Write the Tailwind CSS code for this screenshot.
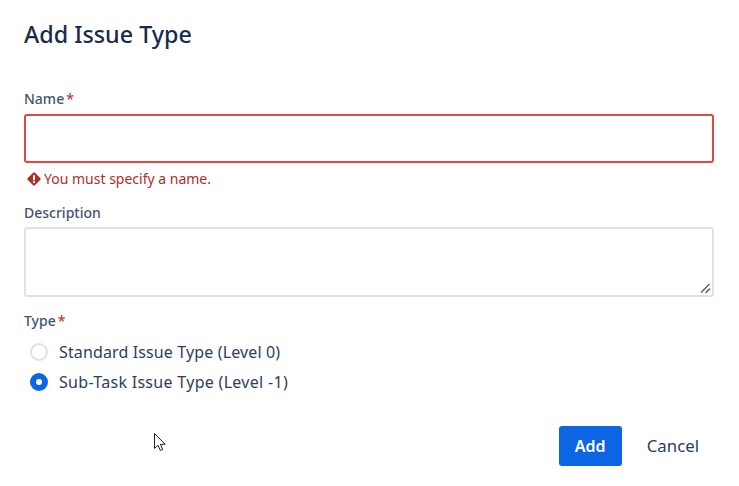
<!DOCTYPE html>
<html lang="en">
<head>
    <meta charset="UTF-8">
    <title>Add Issue Type</title>
    <script src="https://cdn.jsdelivr.net/npm/@tailwindcss/browser@4"></script>
</head>
<body class="bg-white font-['Noto_Sans',sans-serif]">
    <div class="relative w-[739px] h-[486px] overflow-hidden">
        <form class="flex flex-col pl-6 pr-[25px] pt-[17px]">
            <h1 class="h-[34px] text-[23.300px] leading-[34px] font-medium text-[#172b4d]">Add Issue Type</h1>

            <label class="mt-[38px] h-[20px] text-[14px] leading-[20px] font-medium text-[#44546f]">Name<span class="ml-[2px] text-[#c9372c]">*</span></label>
            <input type="text" class="mt-[5px] h-[49px] w-full rounded-[3px] border-2 border-[#e2483d] bg-white outline-none">
            <div class="mt-[6px] flex h-[20px] items-center text-[14px] leading-[20px] text-[#ae2e24]">
                <svg class="ml-[3px] mr-[3px] shrink-0" width="14" height="14" viewBox="0 0 14 14">
                    <path fill="#ae2e24" d="M5.900.9a1.500 1.500 0 0 1 2.200 0l5 5a1.500 1.500 0 0 1 0 2.200l-5 5a1.500 1.500 0 0 1-2.200 0l-5-5a1.500 1.500 0 0 1 0-2.200z"/>
                    <rect x="6" y="3" width="2" height="5.500" rx="1" fill="#fff"/>
                    <circle cx="7" cy="10.200" r="1.100" fill="#fff"/>
                </svg>
                <span>You must specify a name.</span>
            </div>

            <label class="mt-[14px] h-[20px] text-[14px] leading-[20px] font-medium text-[#44546f]">Description</label>
            <div class="relative mt-[4px] h-[70px]">
                <textarea class="block h-[70px] w-full resize-none rounded-[3px] border-2 border-[#dfe1e6] bg-white outline-none"></textarea>
                <!-- resize grip -->
                <svg class="absolute right-[3px] bottom-[3px]" width="11" height="11" viewBox="0 0 11 11">
                    <path fill="none" stroke="#555" stroke-width="1.200" d="M1 9.500 9.500 1M5.500 10 10 5.500"/>
                </svg>
            </div>

            <label class="mt-[14px] h-[20px] text-[14px] leading-[20px] font-medium text-[#44546f]">Type<span class="ml-[2px] text-[#c9372c]">*</span></label>
            <div class="mt-[6px] flex h-[30px] items-center text-[16px] tracking-[.13px] text-[#2c3e5d]">
                <span class="ml-[6px] mr-[11px] size-[18px] rounded-full border-2 border-[#dfe1e6] bg-white"></span>
                <span>Standard Issue Type (Level 0)</span>
            </div>
            <div class="flex h-[30px] items-center text-[16px] tracking-[.3px] text-[#2c3e5d]">
                <span class="ml-[6px] mr-[11px] flex size-[18px] items-center justify-center rounded-full bg-[#0c66e4]">
                    <span class="size-[6px] rounded-full bg-white"></span>
                </span>
                <span>Sub-Task Issue Type (Level -1)</span>
            </div>

            <div class="mt-[29px] flex items-center justify-end">
                <button type="button" class="h-[40px] w-[63px] rounded-[3px] bg-[#0c66e4] text-[16px] font-semibold text-white">Add</button>
                <button type="button" class="ml-[25px] mr-[15px] h-[40px] text-[16.800px] text-[#2c3e5d]">Cancel</button>
            </div>
        </form>

        <svg class="absolute left-[154px] top-[433px]" width="13" height="20" viewBox="0 0 13 20">
            <path fill="#fff" stroke="#1d1d1d" stroke-width="1" stroke-linejoin="round" d="M0.500 0.500v15l3.500-3.300 2.300 5.300 2.400-1-2.300-5.200h4.800z"/>
        </svg>
    </div>
</body>
</html>
